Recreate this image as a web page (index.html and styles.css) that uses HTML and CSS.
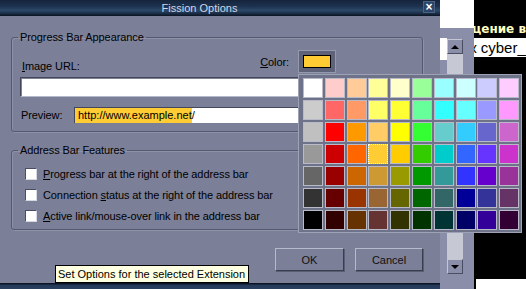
FILE: index.html
```html
<!DOCTYPE html>
<html lang="en">

<head>
    <meta charset="UTF-8">
    <meta name="viewport" content="width=device-width, initial-scale=1.0">
    <title>Fission Options</title>
    <link rel="stylesheet" href="styles.css">
</head>

<body>
    <div class="desktop">
        <!-- Browser window behind the dialog -->
        <div class="backdrop">
            <div class="side">
                <div class="side-top"></div>
                <div class="side-body">
                    <div class="gutter"></div>
                    <div class="scrollbar">
                        <div class="scroll-btn"><span class="arrow up"></span></div>
                        <div class="scroll-track"></div>
                        <div class="scroll-btn"><span class="arrow down"></span></div>
                    </div>
                </div>
            </div>
            <div class="page">
                <div class="page-head"><span>щение в</span></div>
                <div class="page-link"><span>к cyber_</span></div>
                <div class="page-fill"></div>
                <div class="page-foot"></div>
            </div>
        </div>

        <!-- Options dialog -->
        <div class="dialog">
            <div class="titlebar">
                <span class="title">Fission Options</span>
                <span class="close">×</span>
            </div>
            <div class="dialog-body">
                <fieldset class="group group-progress">
                    <legend>Progress Bar Appearance</legend>
                    <div class="url-row">
                        <label class="url-label"><u>I</u>mage URL:</label>
                        <div class="color-pick">
                            <span class="color-label"><u>C</u>olor:</span>
                            <div class="color-btn"><div class="swatch"></div></div>
                        </div>
                    </div>
                    <div class="text-field"></div>
                    <div class="preview-row">
                        <span class="preview-label">Preview:</span>
                        <div class="preview-field">http://www.example.net/</div>
                    </div>
                </fieldset>

                <fieldset class="group group-address">
                    <legend>Address Bar Features</legend>
                    <div class="check-row"><span class="checkbox"></span><span><u>P</u>rogress bar at the right of the address bar</span></div>
                    <div class="check-row"><span class="checkbox"></span><span>Connection <u>s</u>tatus at the right of the address bar</span></div>
                    <div class="check-row"><span class="checkbox"></span><span><u>A</u>ctive link/mouse-over link in the address bar</span></div>
                </fieldset>

                <div class="buttons">
                    <button type="button" class="btn-ok">OK</button>
                    <button type="button" class="btn-cancel">Cancel</button>
                </div>
            </div>
            <div class="dialog-foot"></div>
        </div>

        <!-- Colour picker popup -->
        <div class="palette"></div>

        <div class="tooltip">Set Options for the selected Extension</div>
    </div>

    <script>
        // standard colorpicker palette, 10 x 7
        const colors = [
            '#FFFFFF', '#FFCCCC', '#FFCC99', '#FFFF99', '#FFFFCC', '#99FF99', '#99FFFF', '#CCFFFF', '#CCCCFF', '#FFCCFF',
            '#CCCCCC', '#FF6666', '#FF9966', '#FFFF66', '#FFFF33', '#66FF99', '#33FFFF', '#66FFFF', '#9999FF', '#FF99FF',
            '#C0C0C0', '#FF0000', '#FF9900', '#FFCC66', '#FFFF00', '#33FF33', '#66CCCC', '#33CCFF', '#6666CC', '#CC66CC',
            '#999999', '#CC0000', '#FF6600', '#FFCC33', '#FFCC00', '#33CC00', '#00CCCC', '#3366FF', '#6633FF', '#CC33CC',
            '#666666', '#990000', '#CC6600', '#CC9933', '#999900', '#009900', '#339999', '#3333FF', '#6600CC', '#993399',
            '#333333', '#660000', '#993300', '#996633', '#666600', '#006600', '#336666', '#000099', '#333399', '#663366',
            '#000000', '#330000', '#663300', '#663333', '#333300', '#003300', '#003333', '#000066', '#330099', '#330033'
        ];
        const selectedColor = '#FFCC33';
        const palette = document.querySelector('.palette');

        colors.forEach(color => {
            const cell = document.createElement('div');
            cell.className = 'cell';
            if (color === selectedColor) {
                cell.classList.add('selected');
            }
            cell.style.backgroundColor = color;
            palette.appendChild(cell);
        });
    </script>
</body>
</html>
```

FILE: styles.css
```css
/* General */
body {
    margin: 0;
    font-family: "Liberation Sans", Arial, sans-serif;
    font-size: 11px;
    letter-spacing: -0.1px;
    color: #000;
}

.desktop {
    position: relative;
    width: 526px;
    height: 289px;
    overflow: hidden;
    background-color: #000;
}

/* Window behind the dialog */
.backdrop {
    position: absolute;
    left: 440px;
    top: 0;
    width: 86px;
    height: 289px;
    display: flex;
}

.side {
    width: 34px;
    background-color: #8a8ea8;
}

.side-top {
    height: 28px;
    background-color: #fff;
}

.side-body {
    display: flex;
    padding-top: 10px;
}

.gutter {
    width: 7px;
    height: 21px;
    background-color: #fff;
    border-bottom: 1px dotted #fff;
}

.scrollbar {
    width: 16px;
    height: 235px;
    margin-top: 1px;
    display: flex;
    flex-direction: column;
    background-color: #c6c8d4;
}

.scroll-track {
    flex: 1;
}

.scroll-btn {
    height: 13px;
    display: flex;
    align-items: center;
    justify-content: center;
    background-color: #8a8ea8;
    border: 1px solid;
    border-color: #c4c6d4 #4a4e62 #4a4e62 #c4c6d4;
}

.arrow {
    width: 0;
    height: 0;
    border-left: 4px solid transparent;
    border-right: 4px solid transparent;
}

.arrow.up {
    border-bottom: 4px solid #000;
}

.arrow.down {
    border-top: 4px solid #000;
}

.page {
    width: 52px;
    display: flex;
    flex-direction: column;
    background-color: #000;
    overflow: hidden;
    white-space: nowrap;
}

.page-head {
    height: 38px;
    padding-top: 23px;
    box-sizing: border-box;
    font-family: "DejaVu Sans", sans-serif;
    font-weight: bold;
    font-size: 12px;
    line-height: 13px;
    letter-spacing: 0;
    color: #ffffc0;
}

.page-head span {
    margin-left: -6px;
}

.page-link {
    height: 19px;
    background-color: #fff;
    font-size: 15px;
    line-height: 19px;
    letter-spacing: 0;
}

.page-link span {
    margin-left: -4px;
}

.page-fill {
    flex: 1;
}

.page-foot {
    height: 10px;
    margin-left: 2px;
    background-color: #fff;
}

/* Dialog */
.dialog {
    position: absolute;
    left: 0;
    top: 0;
    width: 440px;
    height: 289px;
    display: flex;
    flex-direction: column;
    background-color: #7b7f98;
}

.titlebar {
    height: 16px;
    display: flex;
    align-items: center;
    background: linear-gradient(#15243b 0, #1d3250 40%, #2b4868 65%, #17283f 88%, #0a1220 100%);
    color: #d2d6e4;
}

.title {
    flex: 1;
    padding-right: 24px;
    text-align: center;
    line-height: 16px;
    letter-spacing: 0;
}

.close {
    width: 10px;
    height: 10px;
    margin-right: 5px;
    margin-bottom: 3px;
    background-color: #2c4566;
    border: 1px solid #4a6284;
    color: #fff;
    font-weight: bold;
    font-size: 12px;
    line-height: 10px;
    text-align: center;
}

.dialog-body {
    flex: 1;
    padding: 14px 17px 0 11px;
}

.group {
    margin: 0;
    padding: 0;
    border: 1px solid #555970;
    border-radius: 3px;
    box-shadow: inset 1px 1px 0 #8e92a9, 1px 1px 0 #8e92a9;
    min-width: 0;
}

.group legend {
    padding: 0 2px;
    line-height: 14px;
}

/* Progress bar group */
.group-progress {
    padding: 0 8px 8px 8px;
}

.group-progress legend {
    margin-left: -2px;
}

.url-row {
    display: flex;
    align-items: flex-end;
    margin-top: 6px;
    padding-right: 78px;
}

.url-label {
    flex: 1;
    line-height: 14px;
    margin-left: 2px;
}

.color-pick {
    display: flex;
    align-items: flex-end;
    gap: 9px;
}

.color-label {
    line-height: 14px;
    margin-bottom: 4px;
}

.color-btn {
    width: 38px;
    height: 23px;
    box-sizing: border-box;
    padding: 4px 4px 0 4px;
    background-color: #5f6379;
    border: 1px solid #9599ae;
}

.swatch {
    width: 26px;
    height: 11px;
    background-color: #ffcc33;
    border: 1px solid #000;
}

.text-field {
    height: 20px;
    margin-top: 4px;
    box-sizing: border-box;
    background-color: #fff;
    border: 1px solid;
    border-color: #43475c #b6b9c9 #b6b9c9 #43475c;
    box-shadow: inset 1px 1px 0 #7d8196;
}

.preview-row {
    display: flex;
    align-items: center;
    margin-top: 10px;
    height: 16px;
}

.preview-label {
    width: 53px;
    padding-left: 1px;
}

.preview-field {
    flex: 1;
    height: 16px;
    box-sizing: border-box;
    padding-left: 3px;
    line-height: 15px;
    border-left: 1px solid #43475c;
    border-top: 1px solid #43475c;
    background: linear-gradient(to right, #ffcc33 117px, #fff 117px);
    letter-spacing: 0;
}

/* Address bar group */
.group-address {
    margin-top: 11px;
    padding: 6px 8px 3px 13px;
}

.group-address legend {
    margin-left: -7px;
}

.check-row {
    display: flex;
    align-items: center;
    gap: 6px;
    height: 21px;
}

.checkbox {
    width: 12px;
    height: 12px;
    box-sizing: border-box;
    background-color: #fff;
    border: 1px solid;
    border-color: #4a4e64 #d6d8e2 #d6d8e2 #4a4e64;
}

/* Buttons */
.buttons {
    display: flex;
    justify-content: flex-end;
    gap: 11px;
    margin-top: 18px;
}

.buttons button {
    height: 23px;
    font-family: "Liberation Sans", Arial, sans-serif;
    font-size: 11px;
    color: #111;
    background-color: #7b7f98;
    border: 1px solid;
    border-color: #b6bacb #393d50 #393d50 #b6bacb;
    box-shadow: 1px 1px 0 #5a5e73;
    padding: 0;
}

.btn-ok {
    width: 69px;
}

.btn-cancel {
    width: 68px;
}

.dialog-foot {
    height: 6px;
    background: linear-gradient(#0c1526 0, #0c1526 1px, #24385a 2px, #2a4060 100%);
}

/* Colour picker popup */
.palette {
    position: absolute;
    left: 298px;
    top: 74px;
    display: grid;
    grid-template-columns: repeat(10, 20px);
    grid-auto-rows: 20px;
    column-gap: 1.8px;
    row-gap: 2px;
    padding: 3px 2px 2px 4px;
    background-color: #6f7389;
    border: 1px solid #9ea2b6;
}

.cell {
    box-sizing: border-box;
    border: 1px solid #b8bac8;
}

.cell.selected {
    border: 1px dotted #fff;
}

/* Tooltip */
.tooltip {
    position: absolute;
    left: 55px;
    top: 265px;
    height: 16px;
    padding: 0 3px 0 2px;
    line-height: 16px;
    background-color: #ffffe1;
    border: 1px solid #000;
    letter-spacing: 0;
}
```
